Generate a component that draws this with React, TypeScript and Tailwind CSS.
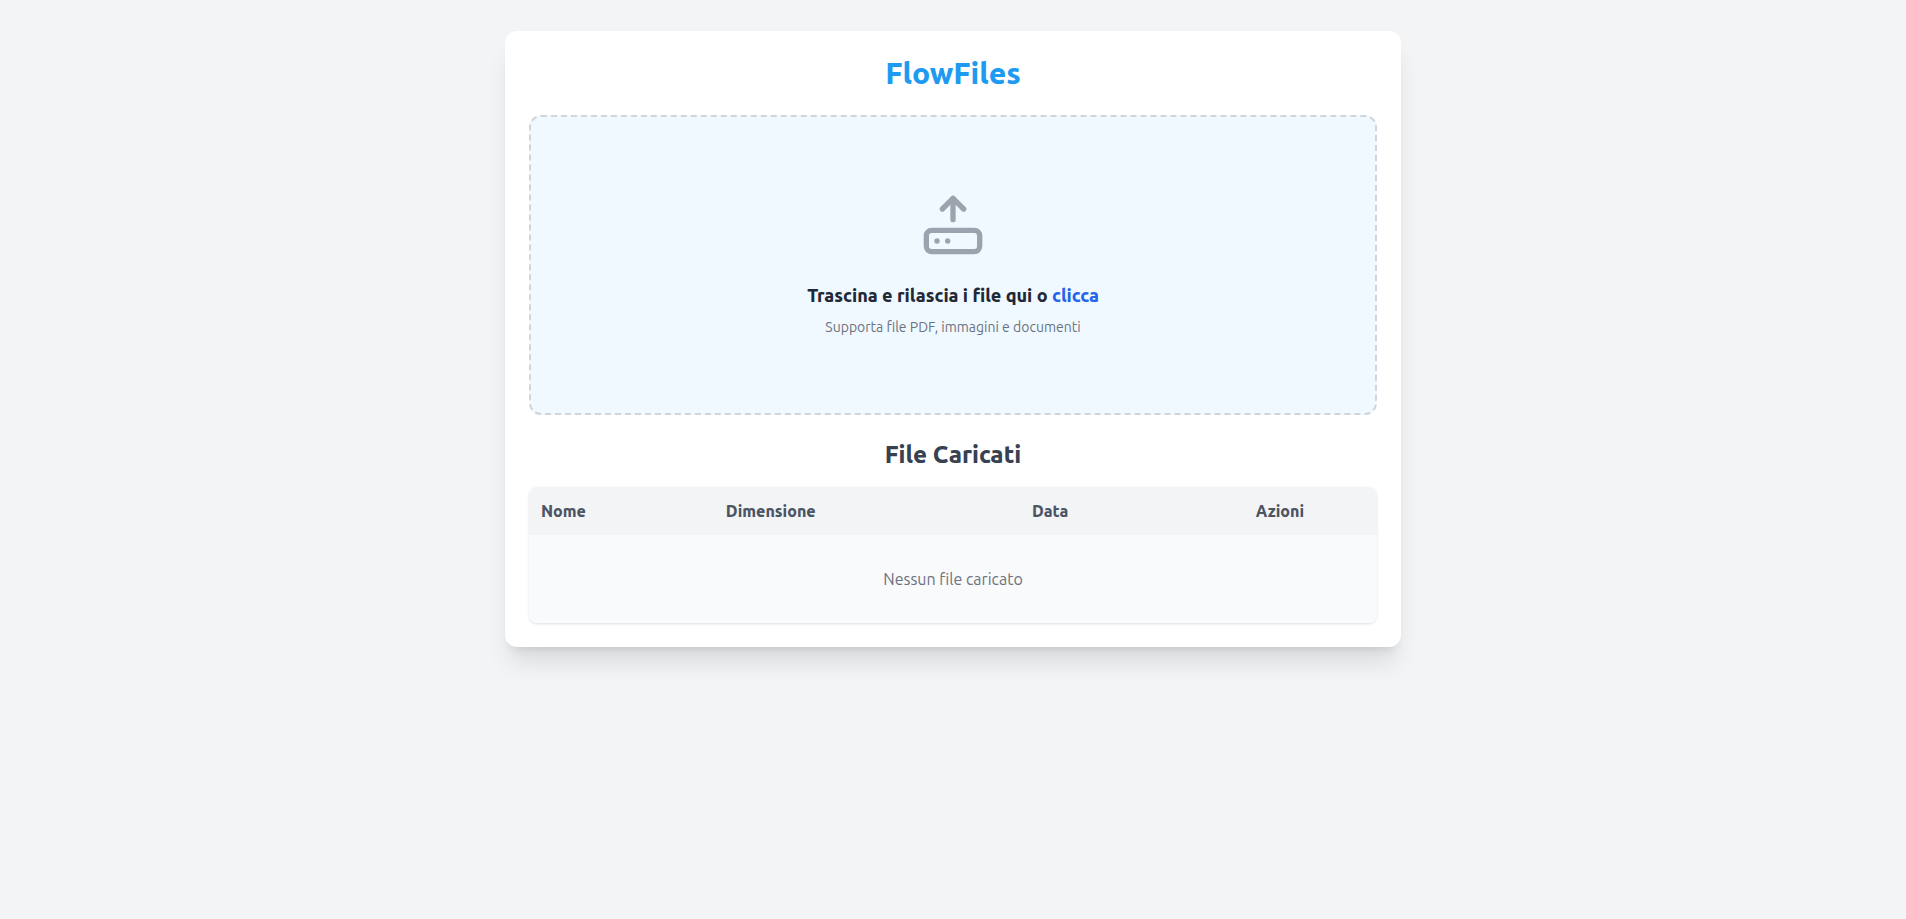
import { useRef, useState } from 'react';
import { HardDriveUpload } from 'lucide-react';

interface UploadedFile {
  name: string;
  size: number;
  date: string;
}

function DropZone({ onFiles }: { onFiles: (files: FileList | null) => void }) {
  const inputRef = useRef<HTMLInputElement>(null);

  return (
    <div
      className="flex min-h-[300px] flex-col items-center justify-center rounded-xl border-2 border-dashed border-[#d1d5db] bg-[#f0f9ff] text-center"
      onDragOver={(event) => event.preventDefault()}
      onDrop={(event) => {
        event.preventDefault();
        onFiles(event.dataTransfer.files);
      }}
    >
      <HardDriveUpload className="size-16 text-[#9ca3af]" strokeWidth={2} aria-hidden="true" />
      <p className="mt-6 text-lg leading-7 font-extrabold text-[#1f2937]">
        Trascina e rilascia i file qui o{' '}
        <button
          type="button"
          className="cursor-pointer text-[#2563eb] hover:underline"
          onClick={() => inputRef.current?.click()}
        >
          clicca
        </button>
      </p>
      <p className="mt-2 text-sm leading-5 text-[#6b7280]">Supporta file PDF, immagini e documenti</p>
      <input
        ref={inputRef}
        type="file"
        multiple
        aria-label="Carica file"
        className="hidden"
        onChange={(event) => onFiles(event.target.files)}
      />
    </div>
  );
}

function FileTable({ files, onRemove }: { files: UploadedFile[]; onRemove: (index: number) => void }) {
  return (
    <div className="overflow-hidden rounded-lg shadow-sm">
      <table className="w-full table-fixed bg-[#f9fafb] text-left text-base">
        <thead className="bg-[#f3f4f6] text-[#4b5563]">
          <tr>
            <th scope="col" className="w-[21.8%] p-3 font-extrabold">Nome</th>
            <th scope="col" className="w-[36.1%] p-3 font-extrabold">Dimensione</th>
            <th scope="col" className="w-[26.4%] p-3 font-extrabold">Data</th>
            <th scope="col" className="p-3 font-extrabold">Azioni</th>
          </tr>
        </thead>
        <tbody>
          {files.length === 0 && (
            <tr>
              <td colSpan={4} className="px-3 py-8 text-center text-[#6b7280]">
                Nessun file caricato
              </td>
            </tr>
          )}
          {files.map((file, index) => (
            <tr key={index}>
              <td className="truncate p-3">{file.name}</td>
              <td className="p-3">{file.size} KB</td>
              <td className="p-3">{file.date}</td>
              <td className="p-3">
                <button type="button" className="text-[#2563eb]" onClick={() => onRemove(index)}>
                  Elimina
                </button>
              </td>
            </tr>
          ))}
        </tbody>
      </table>
    </div>
  );
}

export default function App() {
  const [files, setFiles] = useState<UploadedFile[]>([]);

  const addFiles = (list: FileList | null) => {
    const added = Array.from(list ?? []).map((file) => ({
      name: file.name,
      size: Math.ceil(file.size / 1024),
      date: new Date().toLocaleDateString('it-IT'),
    }));
    setFiles((current) => [...current, ...added]);
  };

  return (
    <div className="min-h-screen bg-[#f3f4f6] px-4 pt-[31px] pb-8 font-[Ubuntu,'Open_Sans',sans-serif]">
      <main className="mx-auto max-w-4xl rounded-xl bg-white p-6 shadow-xl">
        <h1 className="mb-6 text-center text-3xl leading-9 font-extrabold text-[#1e9bf0]">FlowFiles</h1>
        <DropZone onFiles={addFiles} />
        <h2 className="mt-6 mb-4 text-center text-2xl leading-8 font-extrabold text-[#374151]">File Caricati</h2>
        <FileTable
          files={files}
          onRemove={(index) => setFiles((current) => current.filter((_, i) => i !== index))}
        />
      </main>
    </div>
  );
}
